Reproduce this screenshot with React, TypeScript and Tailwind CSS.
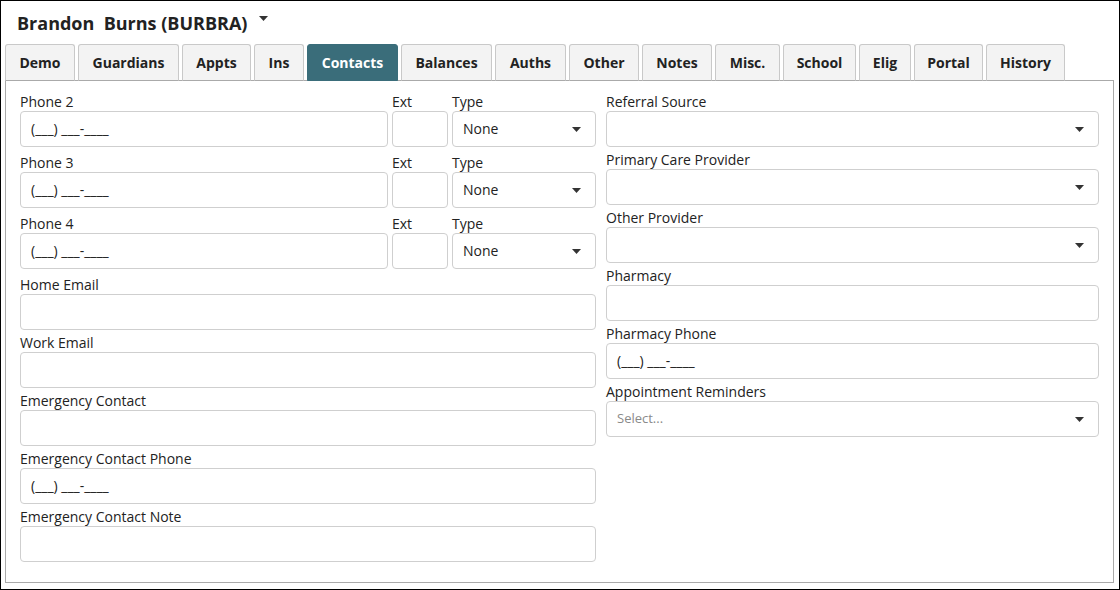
import React from 'react';

const tabs = ['Demo', 'Guardians', 'Appts', 'Ins', 'Contacts', 'Balances', 'Auths', 'Other', 'Notes', 'Misc.', 'School', 'Elig', 'Portal', 'History'];
const tabWidths = [70, 101, 69, 50, 91, 91, 71, 70, 70, 65, 73, 52, 69, 79];

function Caret() {
  return (
    <svg width="9" height="5" viewBox="0 0 9 5" className="shrink-0">
      <path d="M0 0 L9 0 L4.5 5 Z" fill="#333" />
    </svg>
  );
}

function Box({ children, arrow, className = '' }: { children?: React.ReactNode; arrow?: boolean; className?: string }) {
  return (
    <div className={`h-[36px] border border-[#cfcfcf] rounded-[4px] bg-white flex items-center pl-[10px] pr-[14px] pb-[2px] text-[14px] text-[#222] ${className}`}>
      <span className="flex-1 truncate">{children}</span>
      {arrow && <span className="pt-[2px]"><Caret /></span>}
    </div>
  );
}

function Label({ children }: { children: React.ReactNode }) {
  return <div className="h-[22px] pt-[3px] leading-[19px] text-[14px] text-[#222]">{children}</div>;
}

function Field({ label, children, arrow, muted }: { label: string; children?: React.ReactNode; arrow?: boolean; muted?: boolean }) {
  return (
    <div>
      <Label>{label}</Label>
      <Box arrow={arrow}>{muted ? <span className="text-[#8a8a8a] text-[13px]">{children}</span> : children}</Box>
    </div>
  );
}

const phone = '(___) ___-____';

function PhoneRow({ n }: { n: number }) {
  return (
    <div className="flex gap-[4px] mb-[3px]">
      <div className="w-[368px]">
        <Label>Phone {n}</Label>
        <Box>{phone}</Box>
      </div>
      <div className="w-[56px]">
        <Label>Ext</Label>
        <Box />
      </div>
      <div className="w-[144px]">
        <Label>Type</Label>
        <Box arrow>None</Box>
      </div>
    </div>
  );
}

export default function App() {
  return (
    <div className="w-[1120px] h-[590px] border border-black bg-white overflow-hidden" style={{ fontFamily: '"Open Sans", "Liberation Sans", sans-serif' }}>
      <div className="px-[4px]">
        {/* Header */}
        <div className="h-[43px] flex items-center pl-[12px] gap-[12px] pt-[1px]">
          <span className="text-[18px] font-bold text-[#222] whitespace-pre">Brandon  Burns (BURBRA)</span>
          <span className="-mt-[9px]"><Caret /></span>
        </div>

        {/* Tabs */}
        <div className="flex gap-[3px] h-[37px] relative z-10">
          {tabs.map((t, i) => {
            const active = t === 'Contacts';
            return (
              <div
                key={t}
                style={{ width: tabWidths[i] }}
                className={`h-[37px] rounded-t-[3px] border flex items-center justify-center text-[14px] font-bold ${
                  active ? 'bg-[#3a6d7a] border-[#3a6d7a] text-white' : 'bg-[#f3f3f3] border-[#c9c9c9] border-b-[#aaaaaa] text-[#222]'
                }`}
              >
                {t}
              </div>
            );
          })}
        </div>

        {/* Panel */}
        <div className="-mt-px w-[1109px] h-[503px] border border-[#aaaaaa] px-[14px] pt-[8px] flex gap-[10px]">
          <div className="w-[576px]">
            <PhoneRow n={2} />
            <PhoneRow n={3} />
            <PhoneRow n={4} />
            <Field label="Home Email" />
            <Field label="Work Email" />
            <Field label="Emergency Contact" />
            <Field label="Emergency Contact Phone">{phone}</Field>
            <Field label="Emergency Contact Note" />
          </div>
          <div className="w-[493px]">
            <Field label="Referral Source" arrow />
            <Field label="Primary Care Provider" arrow />
            <Field label="Other Provider" arrow />
            <Field label="Pharmacy" />
            <Field label="Pharmacy Phone">{phone}</Field>
            <Field label="Appointment Reminders" arrow muted>Select...</Field>
          </div>
        </div>
      </div>
    </div>
  );
}
